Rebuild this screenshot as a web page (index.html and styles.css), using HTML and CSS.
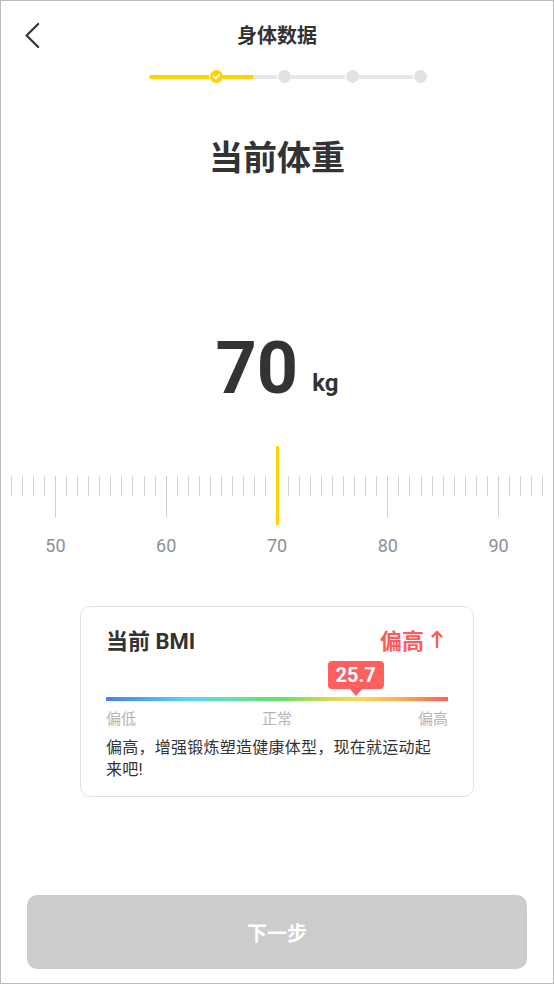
FILE: index.html
```html
<!DOCTYPE html>
<html lang="zh-CN">
<head>
<meta charset="utf-8">
<title>身体数据</title>
<link rel="stylesheet" href="styles.css">
</head>
<body>
<div class="screen">
  <header class="topbar">
    <div class="back">
      <svg width="18" height="28" viewBox="0 0 18 28"><polyline points="15.2,2 3.6,13.5 15.2,25" fill="none" stroke="#333" stroke-width="2.2" stroke-linecap="round" stroke-linejoin="round"/></svg>
    </div>
    <h1 class="title">身体数据</h1>
    <div></div>
  </header>

  <div class="steps">
    <span class="seg seg-first"></span>
    <span class="dot dot-done"><svg width="13" height="13" viewBox="0 0 13 13"><polyline points="3.6,6.7 5.7,8.7 9.5,4.7" fill="none" stroke="#fff" stroke-width="1.7" stroke-linecap="round" stroke-linejoin="round"/></svg></span>
    <span class="seg seg-half"></span>
    <span class="dot"></span>
    <span class="seg"></span>
    <span class="dot"></span>
    <span class="seg"></span>
    <span class="dot"></span>
  </div>

  <h2 class="question">当前体重</h2>

  <div class="weight"><span class="weight-num">70</span><span class="weight-unit">kg</span></div>

  <div class="ruler">
    <div class="ticks">
      <span class="tick"></span><span class="tick"></span><span class="tick"></span><span class="tick"></span>
      <span class="tick tick-long"></span><span class="tick"></span><span class="tick"></span><span class="tick"></span><span class="tick"></span><span class="tick"></span><span class="tick"></span><span class="tick"></span><span class="tick"></span><span class="tick"></span>
      <span class="tick tick-long"></span><span class="tick"></span><span class="tick"></span><span class="tick"></span><span class="tick"></span><span class="tick"></span><span class="tick"></span><span class="tick"></span><span class="tick"></span><span class="tick"></span>
      <span class="tick tick-long"></span><span class="tick"></span><span class="tick"></span><span class="tick"></span><span class="tick"></span><span class="tick"></span><span class="tick"></span><span class="tick"></span><span class="tick"></span><span class="tick"></span>
      <span class="tick tick-long"></span><span class="tick"></span><span class="tick"></span><span class="tick"></span><span class="tick"></span><span class="tick"></span><span class="tick"></span><span class="tick"></span><span class="tick"></span><span class="tick"></span>
      <span class="tick tick-long"></span><span class="tick"></span><span class="tick"></span><span class="tick"></span><span class="tick"></span>
    </div>
    <div class="pointer"></div>
  </div>

  <div class="scale-labels"><span>50</span><span>60</span><span>70</span><span>80</span><span>90</span></div>

  <section class="bmi-card">
    <div class="bmi-head">
      <span class="bmi-title">当前 BMI</span>
      <span class="bmi-status">偏高<svg width="12" height="18" viewBox="0 0 12 18"><line x1="6" y1="17" x2="6" y2="2" stroke="#ff5b5b" stroke-width="2.4" stroke-linecap="round"/><polyline points="1.6,6.4 6,2 10.4,6.4" fill="none" stroke="#ff5b5b" stroke-width="2.4" stroke-linecap="round" stroke-linejoin="round"/></svg></span>
    </div>
    <div class="bmi-marker" style="margin-left: calc(73% - 28px)">
      <div class="bmi-badge">25.7</div>
      <div class="bmi-tip"></div>
    </div>
    <div class="bmi-bar"></div>
    <div class="bmi-labels"><span>偏低</span><span>正常</span><span>偏高</span></div>
    <p class="bmi-desc">偏高，增强锻炼塑造健康体型，现在就运动起来吧!</p>
  </section>

  <button class="next" type="button">下一步</button>
</div>
</body>
</html>
```

FILE: styles.css
```css
* { box-sizing: border-box; }

html, body {
  margin: 0;
  padding: 0;
  background: #fff;
}

body {
  font-family: Roboto, "Noto Sans CJK SC", sans-serif;
  color: #333;
}

.screen {
  width: 554px;
  height: 984px;
  border: 1px solid #bdbdbd;
  background: #fff;
  display: flex;
  flex-direction: column;
  overflow: hidden;
}

/* header */
.topbar {
  height: 69px;
  display: grid;
  grid-template-columns: 1fr auto 1fr;
  align-items: center;
}

.back {
  padding-left: 22px;
  display: flex;
  align-items: center;
  height: 28px;
}

.title {
  margin: 0;
  font-size: 20px;
  line-height: 28px;
  font-weight: 600;
  color: #333;
}

/* steps */
.steps {
  height: 13px;
  margin-left: 148px;
  display: flex;
  align-items: center;
}

.seg {
  flex: none;
  width: 55px;
  height: 4px;
  background: #e6e6e9;
}

.seg-first {
  width: 60.5px;
  background: #ffd200;
  border-radius: 2px 0 0 2px;
}

.seg-half {
  background: linear-gradient(to right, #ffd200 0, #ffd200 29.5px, #e6e6e9 29.5px);
}

.dot {
  flex: none;
  width: 13px;
  height: 13px;
  border-radius: 50%;
  background: #e2e2e6;
  box-shadow: 0 0 0 1px #fff;
  display: flex;
}

.dot-done {
  background: #ffd200;
}

/* question */
.question {
  margin: 58px 0 0;
  font-size: 34px;
  line-height: 34px;
  font-weight: 700;
  text-align: center;
  color: #333;
}

/* weight value */
.weight {
  margin-top: 158px;
  height: 72px;
  display: flex;
  justify-content: center;
  align-items: baseline;
  gap: 14px;
}

.weight-num {
  font-size: 72px;
  line-height: 72px;
  font-weight: 700;
  color: #333;
}

.weight-unit {
  font-size: 24px;
  font-weight: 700;
  color: #333;
  position: relative;
  top: -2px;
}

/* ruler */
.ruler {
  position: relative;
  margin-top: 41px;
  height: 79px;
  padding-top: 30px;
}

.ticks {
  display: flex;
  justify-content: center;
  align-items: flex-start;
  gap: 10.08px;
}

.tick {
  flex: none;
  width: 1px;
  height: 20px;
  background: #d4d4d4;
}

.tick-long {
  height: 41px;
  background: #cfcfcf;
}

.pointer {
  position: absolute;
  top: 0;
  left: calc(50% - 1.5px);
  width: 3px;
  height: 79px;
  background: #ffd200;
}

.scale-labels {
  margin-top: 11px;
  display: flex;
  justify-content: center;
  font-size: 18px;
  line-height: 20px;
  color: #8c8f9a;
}

.scale-labels span {
  flex: none;
  width: 110.8px;
  text-align: center;
}

/* BMI card */
.bmi-card {
  margin: 50px auto 0;
  width: 394px;
  border: 1px solid #e2e2e6;
  border-radius: 10px;
  padding: 17px 25px 15px;
  display: flex;
  flex-direction: column;
}

.bmi-head {
  height: 30px;
  display: flex;
  justify-content: space-between;
  align-items: center;
}

.bmi-title {
  font-size: 22px;
  font-weight: 700;
  color: #333;
}

.bmi-status {
  font-size: 22px;
  font-weight: 700;
  color: #ff5b5b;
  display: flex;
  align-items: center;
  gap: 7px;
  margin-right: 5px;
}

.bmi-marker {
  margin-top: 7px;
  width: 56px;
  display: flex;
  flex-direction: column;
  align-items: center;
}

.bmi-badge {
  width: 56px;
  height: 28px;
  border-radius: 4px;
  background: #ff5f5f;
  color: #fff;
  font-size: 20px;
  font-weight: 700;
  line-height: 28px;
  text-align: center;
}

.bmi-tip {
  width: 0;
  height: 0;
  border-left: 6px solid transparent;
  border-right: 6px solid transparent;
  border-top: 7px solid #ff5f5f;
}

.bmi-bar {
  margin-top: 1px;
  height: 4px;
  background: linear-gradient(to right, #4a7ff0 0%, #55d6f6 24%, #62e2b0 36%, #62e06a 50%, #c8de50 64%, #ffd84e 75%, #ffa454 88%, #ff5a5a 100%);
}

.bmi-labels {
  margin-top: 8px;
  display: flex;
  justify-content: space-between;
  font-size: 15px;
  line-height: 20px;
  color: #b4b4b8;
}

.bmi-desc {
  margin: 8px 0 0;
  max-width: 336px;
  font-size: 16px;
  letter-spacing: 0.25px;
  line-height: 22px;
  color: #333;
}

/* next button */
.next {
  margin: auto auto 14px;
  width: 500px;
  height: 74px;
  border: none;
  border-radius: 10px;
  background: #cccccc;
  color: #fff;
  font-family: Roboto, "Noto Sans CJK SC", sans-serif;
  font-size: 20px;
  font-weight: 600;
  padding: 0;
}
```
